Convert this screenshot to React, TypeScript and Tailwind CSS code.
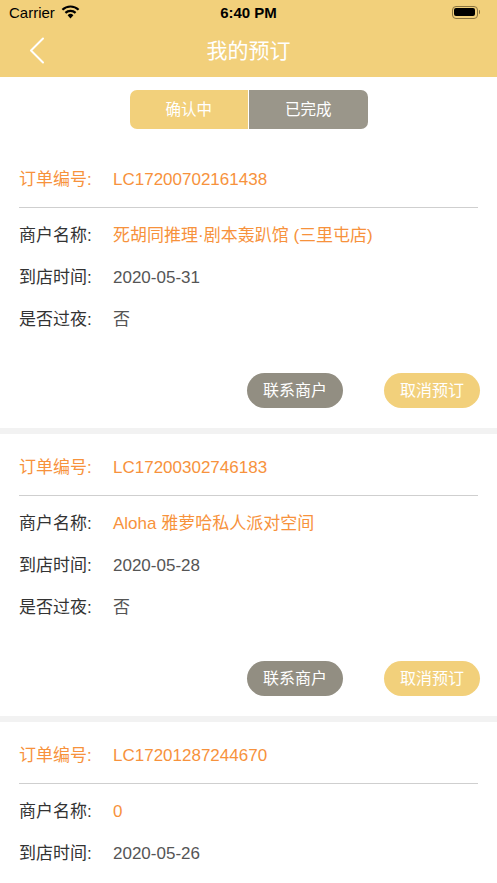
import React from "react"

interface Order {
  no: string
  shop: string
  date: string
  night?: string
}

const orders: Order[] = [
  { no: "LC17200702161438", shop: "死胡同推理·剧本轰趴馆 (三里屯店)", date: "2020-05-31", night: "否" },
  { no: "LC17200302746183", shop: "Aloha 雅萝哈私人派对空间", date: "2020-05-28", night: "否" },
  { no: "LC17201287244670", shop: "0", date: "2020-05-26" },
]

const font = "font-['Liberation_Sans','Noto_Sans_CJK_SC',sans-serif]"

function StatusBar() {
  return (
    <div className="relative h-6 flex items-center px-[9px] text-[15px] text-black">
      <span className="leading-none">Carrier</span>
      <svg width="19" height="14" viewBox="0 0 19 14" className="ml-[6px]">
        <path d="M9.5 13.5 L6.6 10.2 A4.2 4.2 0 0 1 12.4 10.2 Z" fill="#000" />
        <path d="M4.4 7.9 A7.4 7.4 0 0 1 14.6 7.9" stroke="#000" strokeWidth="2.2" fill="none" />
        <path d="M1.4 4.8 A11.6 11.6 0 0 1 17.6 4.8" stroke="#000" strokeWidth="2.2" fill="none" />
      </svg>
      <span className="absolute left-1/2 -translate-x-1/2 font-bold leading-none">6:40 PM</span>
      <div className="ml-auto flex items-center mr-[8px]">
        <div className="w-[26px] h-[13px] rounded-[4px] border border-[#8a7440] p-[1.5px]">
          <div className="w-full h-full rounded-[2px] bg-black" />
        </div>
        <div className="w-[1.5px] h-[4px] bg-[#8a7440] ml-[1px] rounded-r" />
      </div>
    </div>
  )
}

function Row({ label, value, orange }: { label: string; value: string; orange?: boolean }) {
  return (
    <div className="h-[42px] flex items-center text-[17px]">
      <span className="w-[94px] text-[#333]">{label}</span>
      <span className={orange ? "text-[#f7923c]" : "text-[#555]"}>{value}</span>
    </div>
  )
}

function OrderCard({ order }: { order: Order }) {
  return (
    <div>
      <div className="px-[19px] pt-[22px] pb-[20px] bg-white">
        <div className="h-6 flex items-center text-[17px] text-[#f7923c]">
          <span className="w-[94px]">订单编号:</span>
          <span>{order.no}</span>
        </div>
        <div className="mt-[15px] h-px bg-[#cfcfcf]" />
        <div className="mt-[7px]">
          <Row label="商户名称:" value={order.shop} orange />
          <Row label="到店时间:" value={order.date} />
          {order.night && <Row label="是否过夜:" value={order.night} />}
        </div>
        {order.night && (
          <div className="mt-[32px] flex justify-end gap-[41px] -mr-[2px]">
            <button className="w-[96px] h-[35px] rounded-full bg-[#928e82] text-white text-[16px]">联系商户</button>
            <button className="w-[96px] h-[35px] rounded-full bg-[#f2d07b] text-white text-[16px]">取消预订</button>
          </div>
        )}
      </div>
      <div className="h-[6px] bg-[#f2f2f2]" />
    </div>
  )
}

export default function App() {
  return (
    <div className={`w-[497px] h-[883px] overflow-hidden bg-white ${font}`}>
      <div className="bg-[#f2d07b]">
        <StatusBar />
        <div className="relative h-[53px] flex items-center justify-center">
          <svg width="16" height="27" viewBox="0 0 16 27" className="absolute left-[29px] top-[13px]">
            <path d="M14 1.5 L2 13.5 L14 25.5" stroke="#fff" strokeWidth="2" fill="none" strokeLinecap="round" strokeLinejoin="round" />
          </svg>
          <span className="text-white text-[21px]">我的预订</span>
        </div>
      </div>
      <div className="pt-[13px] pb-[17px] flex justify-center">
        <div className="flex h-[39px] w-[238px] rounded-[7px] overflow-hidden text-[15.5px] text-white">
          <div className="flex-1 flex items-center justify-center bg-[#f2d07b]">确认中</div>
          <div className="w-px bg-white" />
          <div className="flex-1 flex items-center justify-center bg-[#9a968a]">已完成</div>
        </div>
      </div>
      {orders.map((o) => (
        <OrderCard key={o.no} order={o} />
      ))}
    </div>
  )
}
